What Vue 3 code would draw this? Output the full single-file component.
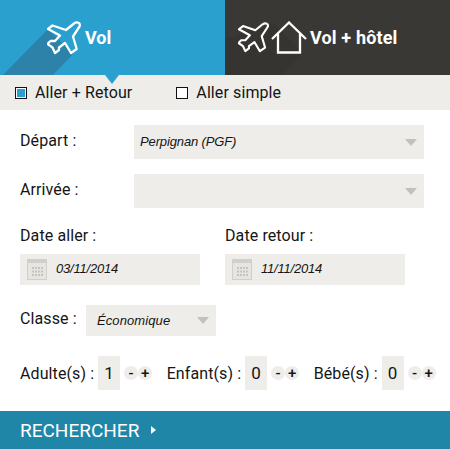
<template>
  <div class="booking">
    <div class="tabs">
      <div class="tab tab--vol">
        <svg class="tab__shadow" viewBox="0 0 225 75"><polygon points="48,29 3,75 53,75 73,54" /></svg>
        <svg class="icon-plane" viewBox="0 0 34 34"><path :d="planePath" /></svg>
        <span class="tab__label">Vol</span>
        <span class="tab__caret"></span>
      </div>
      <div class="tab tab--hotel">
        <svg class="tab__shadow tab__shadow--dark" viewBox="0 0 225 75"><polygon points="0,39 0,75 57,75 77,54 50,24" /></svg>
        <svg class="icon-plane icon-plane--small" viewBox="0 0 34 34"><path :d="planePath" /></svg>
        <svg class="icon-house" viewBox="0 0 36 34">
          <path d="M1 18 L18 1.5 L35 18 M7 13 V31.5 H29 V13" />
        </svg>
        <span class="tab__label tab__label--hotel">Vol + hôtel</span>
      </div>
    </div>

    <div class="trip-type">
      <label class="check"><span class="check__box check__box--on"></span>Aller + Retour</label>
      <label class="check"><span class="check__box"></span>Aller simple</label>
    </div>

    <form class="form" @submit.prevent>
      <div class="row">
        <span class="row__label">Départ :</span>
        <div class="select select--wide">
          <span>Perpignan (PGF)</span>
          <i class="select__arrow"></i>
        </div>
      </div>
      <div class="row row--arrivee">
        <span class="row__label">Arrivée :</span>
        <div class="select select--wide">
          <span></span>
          <i class="select__arrow"></i>
        </div>
      </div>

      <div class="dates">
        <div v-for="d in dates" :key="d.label" class="date">
          <div class="date__label">{{ d.label }}</div>
          <div class="date__input">
            <svg class="icon-cal" viewBox="0 0 20 21">
              <rect x="0.5" y="0.5" width="19" height="20" fill="#e6e5e1" stroke="#d0cfca" />
              <rect x="1" y="1" width="18" height="3" fill="#d0cfca" />
              <g fill="#c4c3be">
                <rect v-for="c in calDots" :key="c.k" :x="c.x" :y="c.y" width="2" height="2" />
              </g>
            </svg>
            <span>{{ d.value }}</span>
          </div>
        </div>
      </div>

      <div class="classe">
        <span class="classe__label">Classe :</span>
        <div class="select select--classe">
          <span>Économique</span>
          <i class="select__arrow"></i>
        </div>
      </div>

      <div class="counts">
        <div v-for="p in passengers" :key="p.label" class="count">
          <span class="count__label">{{ p.label }}</span>
          <span class="count__value">{{ p.value }}</span>
          <span class="count__btns">
            <span class="count__btn">-</span>
            <span class="count__btn">+</span>
          </span>
        </div>
      </div>
    </form>

    <div class="search">
      <span>RECHERCHER</span>
      <i class="search__arrow"></i>
    </div>
  </div>
</template>

<script setup>
const planePath =
  'M27 2.5 C30 0.5 34 1.5 32.5 5.5 L26 15.5 L29.7 28 L24 32 L18 22 L12 26.5 L12 29 L8 32 L5.5 26.5 L0.5 23 L3.5 20 L8 20 L13 14.5 L1 8 L5.5 4.5 L19 9 Z'

const dates = [
  { label: 'Date aller :', value: '03/11/2014' },
  { label: 'Date retour :', value: '11/11/2014' }
]

const passengers = [
  { label: 'Adulte(s) :', value: 1 },
  { label: 'Enfant(s) :', value: 0 },
  { label: 'Bébé(s) :', value: 0 }
]

const calDots = []
for (let r = 0; r < 3; r++) {
  for (let c = 0; c < 4; c++) {
    calDots.push({ k: r + '-' + c, x: 5 + c * 3, y: 8 + r * 3.5 })
  }
}
</script>

<style scoped>
.booking {
  width: 450px;
  height: 449px;
  display: flex;
  flex-direction: column;
  background: #fff;
  color: #151515;
  font-family: Roboto, "Liberation Sans", sans-serif;
  font-size: 16px;
  letter-spacing: 0.1px;
}

.tabs {
  display: flex;
  height: 75px;
}

.tab {
  position: relative;
  width: 225px;
  box-sizing: border-box;
  display: flex;
  align-items: center;
  color: #fff;
}

.tab--vol {
  background: #2aa0cf;
  padding-left: 47px;
}

.tab--hotel {
  background: #3a3835;
  padding-left: 13px;
}

.tab__shadow {
  position: absolute;
  left: 0;
  top: 0;
  width: 225px;
  height: 75px;
  fill: #2c82a8;
}

.tab__shadow--dark {
  fill: #363431;
}

.icon-plane {
  position: relative;
  width: 34px;
  height: 34px;
  flex: none;
  fill: none;
  stroke: #fff;
  stroke-width: 2.3;
  stroke-linejoin: round;
}

.icon-plane--small {
  width: 31px;
  height: 31px;
}

.icon-house {
  position: relative;
  width: 36px;
  height: 34px;
  flex: none;
  margin-left: 2px;
  fill: none;
  stroke: #fff;
  stroke-width: 2.3;
}

.tab__label {
  position: relative;
  font-size: 18px;
  font-weight: 700;
  margin-left: 4px;
  letter-spacing: 0;
}

.tab__label--hotel {
  margin-left: 3px;
  letter-spacing: 0.15px;
}

.tab__caret {
  position: absolute;
  left: 105px;
  top: 75px;
  border-left: 7.5px solid transparent;
  border-right: 7.5px solid transparent;
  border-top: 9px solid #2aa0cf;
}

.trip-type {
  height: 35px;
  background: #eeede9;
  display: flex;
  align-items: center;
  padding-left: 15px;
  gap: 44px;
}

.check {
  display: flex;
  align-items: center;
  gap: 8px;
}

.check__box {
  width: 12px;
  height: 12px;
  box-sizing: border-box;
  border: 1px solid #111;
  padding: 1px;
  background: #fff;
}

.check__box--on {
  background: linear-gradient(#2aa0cf, #2aa0cf) content-box, #fff;
}

.form {
  flex: 1;
  padding: 15px 26px 0 20px;
}

.row {
  display: flex;
  align-items: center;
  height: 34px;
}

.row--arrivee {
  margin-top: 15px;
}

.row__label {
  width: 114px;
  margin-top: -4px;
}

.select {
  display: flex;
  align-items: center;
  justify-content: space-between;
  background: #eeede9;
  font-family: "Liberation Sans", Arial, sans-serif;
  font-style: italic;
  letter-spacing: 0;
  box-sizing: border-box;
}

.select--wide {
  width: 290px;
  height: 34px;
  padding: 0 7px 0 6px;
  font-size: 13px;
  letter-spacing: -0.13px;
}

.select--wide span {
  margin-top: -2px;
}

.select--classe {
  width: 130px;
  height: 31px;
  padding: 0 7px 0 11px;
  font-size: 13px;
  letter-spacing: 0.1px;
}

.select__arrow {
  width: 0;
  height: 0;
  border-left: 6.5px solid transparent;
  border-right: 6.5px solid transparent;
  border-top: 7px solid #c2c1bc;
}

.dates {
  display: flex;
  gap: 25px;
  margin-top: 18px;
}

.date {
  width: 180px;
}

.date__label {
  line-height: 19px;
  margin-bottom: 9px;
}

.date__input {
  display: flex;
  align-items: center;
  gap: 9px;
  height: 31px;
  padding-left: 7px;
  background: #eeede9;
  font-family: "Liberation Sans", Arial, sans-serif;
  font-size: 13px;
  font-style: italic;
  letter-spacing: -0.2px;
}

.date__input span {
  margin-top: -2px;
}

.icon-cal {
  width: 20px;
  height: 21px;
}

.classe {
  display: flex;
  align-items: center;
  margin-top: 20px;
}

.classe__label {
  width: 66px;
  margin-top: -5px;
}

.counts {
  display: flex;
  margin-top: 20px;
  gap: 14.5px;
}

.count {
  display: flex;
  align-items: center;
  white-space: nowrap;
}

.count__label {
  margin-right: 4px;
}

.count__value {
  width: 22px;
  height: 34px;
  background: #eeede9;
  display: flex;
  align-items: center;
  justify-content: center;
  font-size: 17px;
}

.count__btns {
  display: flex;
  margin-left: 4px;
}

.count__btn {
  width: 14px;
  height: 14px;
  border-radius: 50%;
  background: #eeede9;
  display: flex;
  align-items: center;
  justify-content: center;
  font-size: 15px;
  font-weight: 500;
}

.search {
  height: 38px;
  background: #1f86a8;
  color: #fff;
  display: flex;
  align-items: center;
  padding-left: 20px;
  font-size: 19px;
  font-weight: 400;
  letter-spacing: 0;
  gap: 12px;
}

.search__arrow {
  border-top: 4px solid transparent;
  border-bottom: 4px solid transparent;
  border-left: 5px solid #fff;
}
</style>
